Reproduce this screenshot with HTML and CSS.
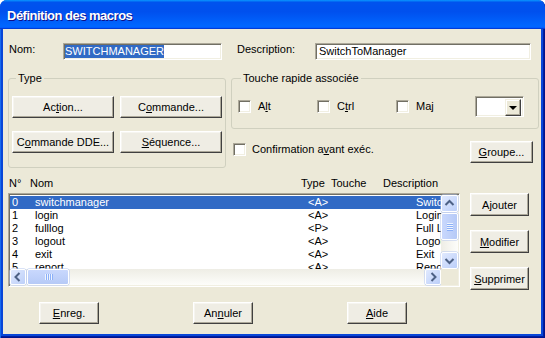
FILE: index.html
```html
<!DOCTYPE html>
<html lang="fr">
<head>
    <meta charset="UTF-8">
    <title>Définition des macros</title>
    <link rel="stylesheet" href="styles.css">
</head>
<body>
    <div class="window">
        <div class="titlebar"><span class="title">Définition des macros</span></div>
        <div class="client">
            <div class="row-top">
                <span class="lbl lbl-nom">Nom:</span>
                <div class="field field-nom"><span class="sel-text">SWITCHMANAGER</span></div>
                <span class="lbl lbl-desc">Description:</span>
                <div class="field field-desc">SwitchToManager</div>
            </div>

            <div class="row-mid">
                <div class="group group-type">
                    <span class="group-title">Type</span>
                    <div class="type-grid">
                        <button class="btn">Ac<u>t</u>ion...</button>
                        <button class="btn">C<u>o</u>mmande...</button>
                        <button class="btn">C<u>o</u>mmande DDE...</button>
                        <button class="btn"><u>S</u>équence...</button>
                    </div>
                </div>
                <div class="col-right">
                    <div class="group group-key">
                        <span class="group-title title-key">Touche rapide associée</span>
                        <div class="key-row">
                            <span class="check"><i class="box"></i>A<u>l</u>t</span>
                            <span class="check"><i class="box"></i>C<u>t</u>rl</span>
                            <span class="check"><i class="box"></i>Ma<u>j</u></span>
                            <div class="combo">
                                <div class="combo-btn"><i class="tri"></i></div>
                            </div>
                        </div>
                    </div>
                    <div class="confirm-row">
                        <span class="check"><i class="box"></i>Confirmation a<u>v</u>ant exéc.</span>
                        <button class="btn btn-groupe"><u>G</u>roupe...</button>
                    </div>
                </div>
            </div>

            <div class="row-list">
                <div class="list-col">
                    <div class="list-head">
                        <span class="h-no">N°</span>
                        <span class="h-nom">Nom</span>
                        <span class="h-type">Type</span>
                        <span class="h-key">Touche</span>
                        <span>Description</span>
                    </div>
                    <div class="listbox">
                        <div class="rows">
                            <div class="row sel"><span class="c-no">0</span><span class="c-nom">switchmanager</span><span class="c-type">&lt;A&gt;</span><span class="c-desc">SwitchToManager</span></div>
                            <div class="row"><span class="c-no">1</span><span class="c-nom">login</span><span class="c-type">&lt;A&gt;</span><span class="c-desc">Login</span></div>
                            <div class="row"><span class="c-no">2</span><span class="c-nom">fulllog</span><span class="c-type">&lt;P&gt;</span><span class="c-desc">Full Log</span></div>
                            <div class="row"><span class="c-no">3</span><span class="c-nom">logout</span><span class="c-type">&lt;A&gt;</span><span class="c-desc">Logout</span></div>
                            <div class="row"><span class="c-no">4</span><span class="c-nom">exit</span><span class="c-type">&lt;A&gt;</span><span class="c-desc">Exit</span></div>
                            <div class="row"><span class="c-no">5</span><span class="c-nom">report</span><span class="c-type">&lt;A&gt;</span><span class="c-desc">Report</span></div>
                        </div>
                        <div class="vscroll">
                            <div class="sb-btn">
                                <svg width="15" height="15" viewBox="0 0 15 15"><polyline points="3.5,9 7.5,5 11.5,9" fill="none" stroke="#4D6185" stroke-width="2"/></svg>
                            </div>
                            <div class="thumb thumb-v"><i></i><i></i><i></i><i></i></div>
                            <div class="track"></div>
                            <div class="sb-btn">
                                <svg width="15" height="15" viewBox="0 0 15 15"><polyline points="3.5,6 7.5,10 11.5,6" fill="none" stroke="#4D6185" stroke-width="2"/></svg>
                            </div>
                        </div>
                        <div class="hscroll">
                            <div class="sb-btn">
                                <svg width="14" height="14" viewBox="0 0 14 14"><polyline points="8.5,3 4.5,7 8.5,11" fill="none" stroke="#4D6185" stroke-width="2"/></svg>
                            </div>
                            <div class="thumb thumb-h"><i></i><i></i><i></i><i></i></div>
                            <div class="track"></div>
                            <div class="sb-btn">
                                <svg width="14" height="14" viewBox="0 0 14 14"><polyline points="5.5,3 9.5,7 5.5,11" fill="none" stroke="#4D6185" stroke-width="2"/></svg>
                            </div>
                        </div>
                        <div class="corner"></div>
                    </div>
                </div>
                <div class="side">
                    <button class="btn">Ajouter</button>
                    <button class="btn"><u>M</u>odifier</button>
                    <button class="btn"><u>S</u>upprimer</button>
                </div>
            </div>

            <div class="row-bottom">
                <button class="btn"><u>E</u>nreg.</button>
                <button class="btn">An<u>n</u>uler</button>
                <button class="btn"><u>A</u>ide</button>
            </div>
        </div>
    </div>
</body>
</html>
```

FILE: styles.css
```css
/* Window frame */
body {
    margin: 0;
    background: #fff;
    font-family: "Liberation Sans", Arial, sans-serif;
    font-size: 11px;
    color: #000;
}

.window {
    width: 545px;
    height: 338px;
    display: flex;
    flex-direction: column;
    background: #0846D8;
    border-radius: 7px 7px 0 0;
    box-shadow: inset 1px 0 #166AEE, inset -1px -1px #00138C, inset -2px -2px #001EA0;
}

.titlebar {
    flex: none;
    height: 29px;
    box-sizing: border-box;
    padding: 2px 0 0 7px;
    display: flex;
    align-items: center;
    border-radius: 7px 7px 0 0;
    background: linear-gradient(180deg, #0997FF, #0053EE 8%, #0050EE 40%, #0066FF 88%, #0066FF 93%, #005BFF 95%, #003DD7 96%, #003DD7);
}

.title {
    color: #fff;
    font-weight: bold;
    font-size: 13px;
    letter-spacing: -0.5px;
    text-shadow: 1px 1px #0F1089;
}

.client {
    flex: 1;
    margin: 0 4px 4px 3px;
    padding-left: 5px;
    background: #ECE9D8;
}

/* Common controls */
.btn {
    font: inherit;
    color: #000;
    padding: 0;
    box-sizing: border-box;
    display: flex;
    align-items: center;
    justify-content: center;
    background: #EFEDE4;
    border: 1px solid;
    border-color: #fff #404040 #404040 #fff;
    box-shadow: inset -1px -1px #ACA899, inset 1px 1px #F6F5F0;
}

.sunken {
    border: 1px solid;
}

.field, .box, .combo, .listbox {
    box-sizing: border-box;
    background: #fff;
    border: 1px solid;
    border-color: #ACA899 #fff #fff #ACA899;
    box-shadow: inset 1px 1px #716F64, inset -1px -1px #F1EFE2;
}

.group {
    box-sizing: border-box;
    border: 1px solid #D0D0BF;
    border-radius: 3px;
}

.group-title {
    display: table;
    margin: -7px 0 0 7px;
    padding: 0 2px;
    line-height: 13px;
    background: #ECE9D8;
}

.check {
    display: flex;
    align-items: center;
    line-height: 13px;
}

.box {
    width: 13px;
    height: 13px;
    margin-right: 6px;
}

/* Name / description */
.row-top {
    display: flex;
    margin-top: 14px;
    height: 17px;
}

.lbl {
    line-height: 13px;
}

.lbl-nom {
    width: 54px;
    padding-left: 1px;
}

.lbl-desc {
    width: 78px;
    margin-left: 15px;
}

.field {
    height: 17px;
    padding: 1px 0 0 1px;
    line-height: 13px;
    white-space: nowrap;
    overflow: hidden;
}

.field-nom {
    width: 159px;
}

.field-desc {
    width: 216px;
    padding-left: 3px;
}

.sel-text {
    display: inline-block;
    background: #316AC5;
    color: #fff;
}

/* Type and hotkey groups */
.row-mid {
    display: flex;
    margin-top: 18px;
}

.group-type {
    width: 218px;
    height: 90px;
}

.type-grid {
    display: grid;
    grid-template-columns: 102px 102px;
    grid-auto-rows: 22px;
    column-gap: 6px;
    row-gap: 13px;
    margin: 11px 0 0 3px;
}

.col-right {
    width: 308px;
    margin-left: 5px;
}

.group-key {
    height: 51px;
}

.title-key {
    margin-left: 9px;
}

.key-row {
    display: flex;
    align-items: center;
    margin: 11px 0 0 6px;
}

.key-row .check {
    width: 79px;
}

.key-row .box {
    margin-right: 7px;
}

.combo {
    width: 49px;
    height: 21px;
    padding: 2px;
    display: flex;
    justify-content: flex-end;
}

.combo-btn {
    width: 16px;
    height: 17px;
    box-sizing: border-box;
    display: flex;
    align-items: center;
    justify-content: center;
    background: #ECE9D8;
    border: 1px solid;
    border-color: #F1EFE2 #404040 #404040 #F1EFE2;
    box-shadow: inset -1px -1px #ACA899, inset 1px 1px #fff;
}

.tri {
    width: 0;
    height: 0;
    border-left: 4px solid transparent;
    border-right: 4px solid transparent;
    border-top: 4px solid #000;
    margin-top: 1px;
}

.confirm-row {
    display: flex;
    align-items: flex-start;
    padding-left: 2px;
}

.confirm-row .check {
    margin-top: 14px;
}

.btn-groupe {
    width: 63px;
    height: 22px;
    margin: 12px 6px 0 auto;
}

/* Macro list */
.row-list {
    display: flex;
    margin-top: 9px;
}

.list-col {
    width: 452px;
}

.list-head {
    display: flex;
    height: 16px;
    line-height: 13px;
    padding-left: 1px;
}

.h-no { width: 21px; }
.h-nom { width: 271px; }
.h-type { width: 30px; }
.h-key { width: 52px; }

.listbox {
    width: 452px;
    height: 94px;
    padding: 1px;
    display: grid;
    grid-template-columns: 431px 17px;
    grid-template-rows: 74px 16px;
}

.rows {
    overflow: hidden;
    padding-top: 1px;
    background: #fff;
}

.row {
    display: flex;
    height: 13px;
    line-height: 13px;
    white-space: nowrap;
}

.row.sel {
    background: #316AC5;
    color: #fff;
}

.c-no {
    width: 25px;
    flex: none;
    box-sizing: border-box;
    padding-left: 2px;
}

.c-nom { width: 273px; flex: none; }
.c-type { width: 108px; flex: none; }

/* Scrollbars */
.vscroll, .hscroll {
    display: flex;
    background: #F4F3EE;
}

.vscroll {
    flex-direction: column;
    background: linear-gradient(to right, #EEEDE5, #FDFDFA);
}

.hscroll {
    background: linear-gradient(to bottom, #EEEDE5, #FDFDFA);
}

.track {
    flex: 1;
}

.sb-btn, .thumb {
    flex: none;
    box-sizing: border-box;
    display: flex;
    align-items: center;
    justify-content: center;
    border: 1px solid #fff;
    border-radius: 2px;
    background: linear-gradient(135deg, #E0E9FE, #BCCFF9);
    box-shadow: 0 0 0 0.5px #B3C6F0;
}

.vscroll .sb-btn {
    width: 17px;
    height: 17px;
}

.hscroll .sb-btn {
    width: 16px;
    height: 16px;
}

.thumb-v {
    width: 17px;
    height: 27px;
    margin-top: 1px;
    flex-direction: column;
    gap: 1px;
    background: linear-gradient(to right, #C9D8FD, #B6CAF7);
}

.thumb-v i {
    width: 6px;
    height: 1px;
    background: #EEF4FE;
    box-shadow: 0 1px #8CB0F8;
}

.thumb-h {
    width: 42px;
    height: 16px;
    margin-left: 1px;
    gap: 1px;
    background: linear-gradient(to bottom, #C9D8FD, #B6CAF7);
}

.thumb-h i {
    width: 1px;
    height: 6px;
    background: #EEF4FE;
    box-shadow: 1px 0 #8CB0F8;
}

.corner {
    background: #ECE9D8;
}

.side {
    display: flex;
    flex-direction: column;
    gap: 14px;
    margin-left: 10px;
    padding-top: 16px;
}

.side .btn {
    width: 59px;
    height: 23px;
}

/* Bottom buttons */
.row-bottom {
    display: flex;
    gap: 94px;
    margin: 12px 0 0 31px;
}

.row-bottom .btn {
    width: 60px;
    height: 22px;
}
```
